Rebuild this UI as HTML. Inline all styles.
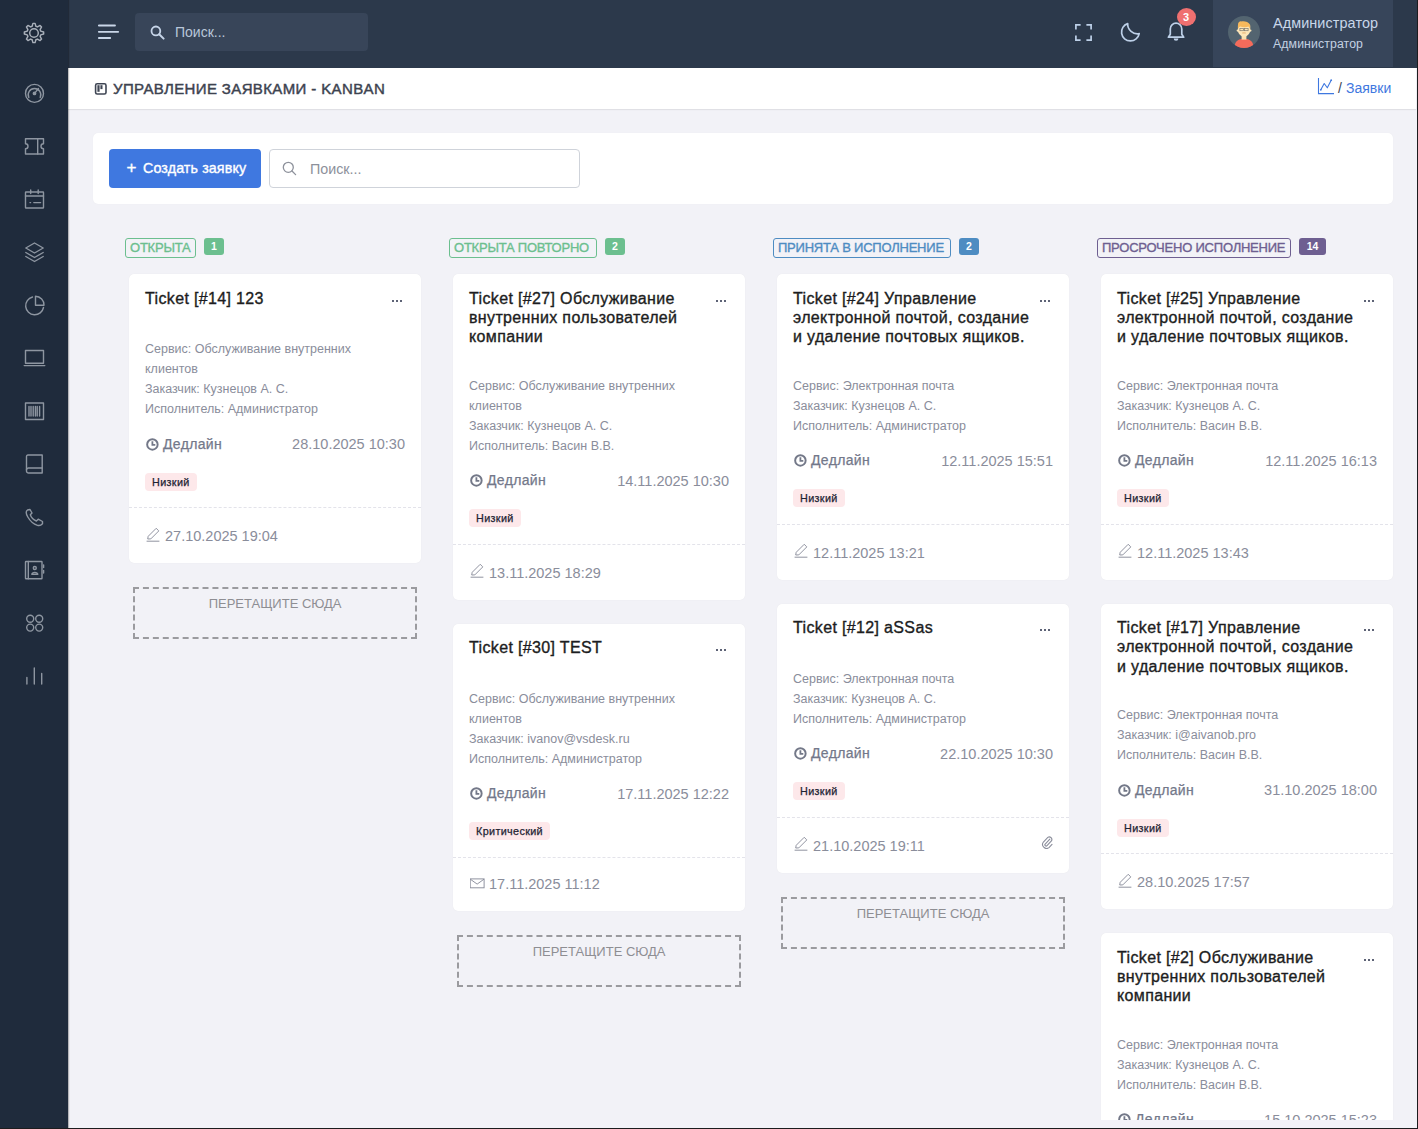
<!DOCTYPE html>
<html><head><meta charset="utf-8"><style>
*{box-sizing:border-box;margin:0;padding:0}
html,body{width:1418px;height:1129px;overflow:hidden;background:#1c1c1e}
body{font-family:"Liberation Sans",sans-serif;position:relative;color:#1c1d21}
#frame{position:absolute;left:0;top:0;width:1417px;height:1128px;background:#f2f2f7;overflow:hidden}
#side{position:absolute;left:0;top:0;width:68px;height:1128px;background:#1f2b3c;z-index:3;box-shadow:1px 0 1px rgba(0,0,0,.25)}
#top{position:absolute;left:68px;top:0;width:1349px;height:68px;background:#2c394b;z-index:2}
#tbar{position:absolute;left:68px;top:68px;width:1348px;height:41px;background:#fff;box-shadow:0 1px 1px rgba(0,0,0,.07);z-index:1}
#board{position:absolute;left:68px;top:109px;width:1348px;height:1011px;overflow:hidden}
.abs{position:absolute}
.col{position:absolute;top:165px;width:292px;display:flex;flex-direction:column;gap:24px}
.card{position:absolute;background:#fff;border-radius:5px;box-shadow:0 0 1px rgba(0,0,0,.06)}
.tk{position:relative;width:292px;background:#fff;border-radius:5px;box-shadow:0 0 1px rgba(0,0,0,.08);padding:14.6px 16px 0 16px}
.tk .hd{min-height:21.2px}
.tk .ttl{font-size:16px;line-height:19.2px;white-space:nowrap;color:#1c1d21;width:240px;letter-spacing:0.35px;-webkit-text-stroke:0.35px #1c1d21}
.tk .dots{position:absolute;left:263px;top:25.5px;width:11px;height:2px}
.tk .dots i{position:absolute;top:0;width:2px;height:2px;background:#5d6376}
.tk .inf{position:relative;top:1px;margin-top:28.3px;font-size:12.5px;line-height:20px;color:#8a8d9b;white-space:nowrap}
.tk .dl{margin-top:14.85px;height:20px;line-height:20px;position:relative}
.tk .dl b{position:absolute;left:18px;top:0.6px;font-size:14px;color:#73788a;font-weight:normal;letter-spacing:0.35px;-webkit-text-stroke:0.25px #73788a}
.tk .dl span{position:absolute;right:0;top:1.3px;font-size:14.5px;color:#8a8d9b}
.tk .dl svg{position:absolute;left:1px;top:4.6px}
.tk .pr{margin-top:19.9px;display:inline-block;height:18px;line-height:18px;padding:0 7px;border-radius:4px;background:#fde8ea;font-size:10.8px;color:#1e2433;vertical-align:top;letter-spacing:0.35px;-webkit-text-stroke:0.25px #1e2433}
.tk .sep{margin:16.35px -16px 0 -16px;border-top:1px dashed #e3e3ea}
.tk .ft{margin-top:17.55px;height:20px;line-height:20px;position:relative;margin-bottom:17.51px}
.tk .ft.m{height:17.9px;line-height:17.9px}
.tk .ft span{position:absolute;left:20px;top:0.6px;font-size:14.5px;color:#8a8d9b}
.tk .ft svg{position:absolute;left:0.5px;top:0.8px}
.drop{position:relative;margin-left:4px;width:284px;height:52px;border:2px dashed #9b9b9f;text-align:center;font-size:13px;color:#8e8e93;padding-top:7px;line-height:16px}
.colh{position:absolute;height:20px;border:1px solid;border-radius:3px;font-size:13px;line-height:18px;padding:0 0 0 4px;white-space:nowrap;letter-spacing:-0.22px;-webkit-text-stroke:0.35px currentColor}
.cnt{position:absolute;height:17px;border-radius:3px;font-size:10.5px;font-weight:bold;color:#fff;text-align:center;line-height:17px}
</style></head><body>
<div id="frame">
<div id="side">
<svg style="position:absolute;left:0;top:0" width="68" height="700" viewBox="0 0 68 700">
<g fill="none" stroke="#8e96a1" stroke-width="1.4" stroke-linecap="round" stroke-linejoin="round">
 <!-- gear -->
 <path id="gear" stroke="#a9b0ba" stroke-width="1.45" d="M32.13 26.25 L32.94 23.36 L35.06 23.36 L35.87 26.25 L37.45 26.91 L40.06 25.43 L41.57 26.94 L40.09 29.55 L40.75 31.13 L43.64 31.94 L43.64 34.06 L40.75 34.87 L40.09 36.45 L41.57 39.06 L40.06 40.57 L37.45 39.09 L35.87 39.75 L35.06 42.64 L32.94 42.64 L32.13 39.75 L30.55 39.09 L27.94 40.57 L26.43 39.06 L27.91 36.45 L27.25 34.87 L24.36 34.06 L24.36 31.94 L27.25 31.13 L27.91 29.55 L26.43 26.94 L27.94 25.43 L30.55 26.91 Z"/>
 <circle cx="34" cy="33" r="4.3" stroke="#a9b0ba" stroke-width="1.45"/>
 <!-- speedometer -->
 <circle cx="34.5" cy="93.4" r="9"/>
 <path d="M28.8 97.5 A6.3 6.3 0 1 1 40.2 97.5"/>
 <path d="M34.5 93.4 L38.4 88.6"/>
 <circle cx="34.5" cy="93.4" r="1.2" fill="#8e96a1"/>
 <!-- ticket -->
 <path d="M25.5 138.7 H43.5 V143.8 A2.5 2.5 0 0 0 43.5 148.8 V154 H25.5 V148.8 A2.5 2.5 0 0 0 25.5 143.8 Z"/>
 <path d="M37.7 138.7 V154"/>
 <!-- calendar -->
 <rect x="25.5" y="192" width="18" height="16" rx="0.5"/>
 <path d="M25.5 196 H43.5 M30.7 190 V193.5 M38.2 190 V193.5 M30 202.6 H30.6 M33.8 202.6 H40.6"/>
 <!-- layers -->
 <path d="M34.5 243 L43.2 248 L34.5 253 L25.8 248 Z"/>
 <path d="M25.8 252.5 L34.5 257.5 L43.2 252.5"/>
 <path d="M25.8 256.5 L34.5 261.5 L43.2 256.5"/>
 <!-- pie -->
 <path d="M32.5 297 A9 9 0 1 0 43.5 307.5"/>
 <path d="M35.5 296.2 V305.2 H44 A8.6 8.6 0 0 0 35.5 296.2 Z"/>
 <!-- laptop -->
 <rect x="25.5" y="350.5" width="18" height="12.8"/>
 <path d="M24.2 365.6 H44.8"/>
 <!-- barcode -->
 <rect x="25.5" y="403" width="18" height="16.5"/>
 <path d="M29 406.5 V416 M31 406.5 V416 M33.2 406.5 V416 M35.4 406.5 V416 M37.2 406.5 V416 M39.6 406.5 V416"/>
 <!-- book -->
 <path d="M27.8 455 H42.2 V473 H28.8 A2 2 0 0 1 26.5 471 V456.5 A1.5 1.5 0 0 1 27.8 455 Z"/>
 <path d="M26.5 469.7 A2 2 0 0 1 28.8 468 H42.2"/>
 <!-- phone -->
 <path d="M27.5 510 C26 511 25.8 513.5 27.8 517 C30 520.8 33.2 524 37.5 525.3 C39.5 526 41 525.4 42.5 523.8 L42.5 521.5 L38.2 519.2 L36.4 521 C33.9 520 31.2 517.4 30.3 514.8 L32 513 L30 509.5 Z"/>
 <!-- contacts -->
 <rect x="25.5" y="561.5" width="16.5" height="17.3" rx="0.5"/>
 <path d="M28.3 561.5 V578.8 M43.6 565 V567.5 M43.6 570.5 V573"/>
 <circle cx="34.8" cy="568" r="1.5"/>
 <path d="M31.8 574.3 C32.2 571.7 37.4 571.7 37.8 574.3 Z"/>
 <!-- four circles -->
 <circle cx="30.2" cy="618.8" r="3.5"/><circle cx="39.2" cy="618.8" r="3.5"/>
 <circle cx="30.2" cy="627.6" r="3.5"/><circle cx="39.2" cy="627.6" r="3.5"/>
 <!-- bars -->
 <path d="M26.9 677.5 V684 M34.3 668 V684 M41.7 673.5 V684"/>
</g></svg></div>

<div id="top">
 <svg class="abs" style="left:30px;top:24px" width="22" height="16" viewBox="0 0 22 16"><path d="M0.8 1.5 H17 M0.8 7.8 H20.2 M0.8 14 H12.2" stroke="#c9d6e8" stroke-width="1.8" stroke-linecap="round"/></svg>
 <div class="abs" style="left:67px;top:13px;width:233px;height:38px;background:#384559;border-radius:4px"></div>
 <svg class="abs" style="left:82px;top:25px" width="15" height="15" viewBox="0 0 15 15"><circle cx="5.9" cy="5.9" r="4.4" fill="none" stroke="#c6d4e8" stroke-width="1.8"/><path d="M9.2 9.2 L13.6 13.6" stroke="#c6d4e8" stroke-width="2" stroke-linecap="round"/></svg>
 <div class="abs" style="left:107px;top:24px;font-size:14px;line-height:16px;color:#b9c7da">Поиск...</div>
 <!-- fullscreen -->
 <svg class="abs" style="left:1007px;top:24px" width="17" height="17" viewBox="0 0 17 17"><path d="M0.9 5.6 V0.9 H5.6 M11.4 0.9 H16.1 V5.6 M16.1 11.4 V16.1 H11.4 M5.6 16.1 H0.9 V11.4" fill="none" stroke="#bdd0e8" stroke-width="1.7"/></svg>
 <svg class="abs" style="left:0;top:0" width="1349" height="68" viewBox="68 0 1349 68">
  <path d="M1127.7 23.6 A8.9 8.9 0 1 0 1139.2 33.6 A9.75 9.75 0 0 1 1127.7 23.6 Z" fill="none" stroke="#bdd0e8" stroke-width="1.7" stroke-linejoin="round"/>
  <path d="M1168.4 37.2 L1170.3 34.2 V28.9 A5.75 5.75 0 0 1 1181.8 28.9 V34.2 L1183.7 37.2 Z" fill="none" stroke="#bdd0e8" stroke-width="1.7" stroke-linejoin="round"/>
  <path d="M1173.7 38.4 A2.35 2.35 0 0 0 1178.4 38.4 Z" fill="#bdd0e8"/>
 </svg>
 <div class="abs" style="left:1108.5px;top:7.5px;width:19px;height:18px;border-radius:50%;background:#ef7070;color:#fff;font-size:11px;line-height:18px;font-weight:bold;text-align:center">3</div>
 <!-- user -->
 <div class="abs" style="left:1145px;top:0;width:180px;height:67px;background:#37455a"></div>
 <svg class="abs" style="left:1160px;top:16px" width="32" height="32" viewBox="0 0 32 32">
  <defs><clipPath id="av"><circle cx="16" cy="16" r="16"/></clipPath></defs>
  <circle cx="16" cy="16" r="16" fill="#536470"/>
  <g clip-path="url(#av)">
  <path d="M6.4 33 C6.4 25.2 9.5 23.2 16 22.8 C22.5 23.2 25.6 25.2 25.6 33 Z" fill="#f56b5b"/>
  </g>
  <rect x="13.6" y="18" width="4.8" height="5.6" fill="#fbe0ad"/>
  <circle cx="9.7" cy="14.6" r="1.1" fill="#fde6b8"/><circle cx="22.4" cy="14.6" r="1.1" fill="#fde6b8"/>
  <path d="M9.9 9.5 V14.5 C9.9 17.6 13 20.8 16 20.8 C19 20.8 22.2 17.6 22.2 14.5 V9.5 Z" fill="#fde6b8"/>
  <path d="M10 13.2 V8.8 C10 6.2 11.6 5 13.6 5.4 C15.6 4.8 20.6 5.4 22.1 8.8 V13.4 C21.6 11.8 21 11.2 20.5 10.6 C18.5 11.4 14.5 11.2 12.2 10.6 C11 11.2 10.4 12 10 13.2 Z" fill="#f8b95c"/>
  <rect x="11.9" y="12.4" width="3.5" height="2.3" fill="none" stroke="#7a7770" stroke-width="0.7"/>
  <rect x="16.6" y="12.4" width="3.5" height="2.3" fill="none" stroke="#7a7770" stroke-width="0.7"/>
  <ellipse cx="16" cy="16.9" rx="2.2" ry="0.7" fill="#eab87b"/>
 </svg>
 <div class="abs" style="left:1205px;top:15px;font-size:14.4px;line-height:16px;color:#c8d7ea;letter-spacing:0.1px">Администратор</div>
 <div class="abs" style="left:1205px;top:36.5px;font-size:12.3px;line-height:14px;color:#c3d1e2;letter-spacing:0.1px">Администратор</div>
</div>

<div id="tbar">
 <svg class="abs" style="left:26px;top:14px" width="14" height="14" viewBox="0 0 14 14"><rect x="1.6" y="1.8" width="10.4" height="10.2" rx="1.6" fill="none" stroke="#3f4654" stroke-width="1.6"/><rect x="3.4" y="3.2" width="2.2" height="6.6" fill="#3f4654"/><rect x="6.4" y="3.2" width="2.1" height="3.9" fill="#3f4654"/></svg>
 <div class="abs" style="left:45px;top:12px;font-size:15px;letter-spacing:0.37px;-webkit-text-stroke:0.45px #3d4350;line-height:17px;color:#3d4350">УПРАВЛЕНИЕ ЗАЯВКАМИ - KANBAN</div>
 <svg class="abs" style="left:1249px;top:9px" width="18" height="18" viewBox="0 0 18 18"><path d="M1.5 1 V16.6 H17" fill="none" stroke="#3f78e0" stroke-width="1.1"/><path d="M3.8 12.8 L7.2 6.5 L10.3 10.8 L14.2 3.2" fill="none" stroke="#3f78e0" stroke-width="1.1" stroke-linejoin="round"/><circle cx="3.8" cy="12.8" r="0.9" fill="#3f78e0"/><circle cx="14.2" cy="3.2" r="0.9" fill="#3f78e0"/></svg>
 <div class="abs" style="left:1270px;top:12px;font-size:14px;line-height:17px;color:#3d4350">/</div>
 <div class="abs" style="left:1278px;top:12px;font-size:14px;line-height:17px;color:#3f78e0">Заявки</div>
</div>
<div id="board">

<div class="card" style="left:25px;top:24px;width:1300px;height:71px">
 <div class="abs" style="left:16px;top:16px;width:152px;height:39px;background:#3f78e0;border-radius:4px;color:#fff;font-size:14.3px;line-height:37px;padding-left:17.5px;white-space:nowrap;letter-spacing:0.1px;-webkit-text-stroke:0.35px #fff"><span style="font-size:17px;position:relative;top:0px;margin-right:6.5px">+</span>Создать заявку</div>
 <div class="abs" style="left:176px;top:16px;width:311px;height:39px;border:1px solid #cfd3da;border-radius:4px"></div>
 <svg class="abs" style="left:189px;top:28px" width="15" height="15" viewBox="0 0 15 15"><circle cx="6.3" cy="6.3" r="5" fill="none" stroke="#8d919b" stroke-width="1.3"/><path d="M10 10 L13.6 13.6" stroke="#8d919b" stroke-width="1.3" stroke-linecap="round"/></svg>
 <div class="abs" style="left:217px;top:28px;font-size:14.3px;line-height:16px;color:#8d919b">Поиск...</div>
</div>
<div class="colh" style="left:57px;top:129px;width:71px;color:#6cbf8f;border-color:#6cbf8f">ОТКРЫТА</div><div class="cnt" style="left:136px;top:129px;width:20px;background:#6cbf8f">1</div><div class="colh" style="left:381px;top:129px;width:148px;color:#6cbf8f;border-color:#6cbf8f">ОТКРЫТА ПОВТОРНО</div><div class="cnt" style="left:537px;top:129px;width:20px;background:#6cbf8f">2</div><div class="colh" style="left:705px;top:129px;width:178px;color:#4e8cc2;border-color:#4e8cc2">ПРИНЯТА В ИСПОЛНЕНИЕ</div><div class="cnt" style="left:891px;top:129px;width:20px;background:#4e8cc2">2</div><div class="colh" style="left:1029px;top:129px;width:194px;color:#6e5f91;border-color:#6e5f91">ПРОСРОЧЕНО ИСПОЛНЕНИЕ</div><div class="cnt" style="left:1231px;top:129px;width:27px;background:#6e5f91">14</div>
<div class="col" style="left:61px"><div class="tk">
<div class="hd"><div class="ttl">Ticket [#14] 123</div></div>
<div class="dots"><i style="left:0"></i><i style="left:4.2px"></i><i style="left:8.4px"></i></div>
<div class="inf">Сервис: Обслуживание внутренних<br>клиентов<br>Заказчик: Кузнецов А. С.<br>Исполнитель: Администратор</div>
<div class="dl"><svg width="13" height="13" viewBox="0 0 13 13"><circle cx="6.4" cy="6.4" r="5.25" fill="none" stroke="#737888" stroke-width="1.95"/><path d="M6.4 3.3 V6.9 H9.3" fill="none" stroke="#737888" stroke-width="1.8"/></svg><b>Дедлайн</b><span>28.10.2025 10:30</span></div>
<div style="height:37.9px"><div class="pr">Низкий</div></div>
<div class="sep"></div>
<div class="ft"><svg width="15" height="15" viewBox="0 0 15 15"><path d="M0.6 14.2 H13.4 M1.7 12 L2.2 9.3 L10.2 1.3 L12.8 3.9 L4.8 11.9 Z" fill="none" stroke="#8a8d9b" stroke-width="0.95" stroke-linejoin="round"/></svg><span>27.10.2025 19:04</span></div>
</div><div class="drop">ПЕРЕТАЩИТЕ СЮДА</div></div><div class="col" style="left:385px"><div class="tk">
<div class="hd"><div class="ttl">Ticket [#27] Обслуживание<br>внутренних пользователей<br>компании</div></div>
<div class="dots"><i style="left:0"></i><i style="left:4.2px"></i><i style="left:8.4px"></i></div>
<div class="inf">Сервис: Обслуживание внутренних<br>клиентов<br>Заказчик: Кузнецов А. С.<br>Исполнитель: Васин В.В.</div>
<div class="dl"><svg width="13" height="13" viewBox="0 0 13 13"><circle cx="6.4" cy="6.4" r="5.25" fill="none" stroke="#737888" stroke-width="1.95"/><path d="M6.4 3.3 V6.9 H9.3" fill="none" stroke="#737888" stroke-width="1.8"/></svg><b>Дедлайн</b><span>14.11.2025 10:30</span></div>
<div style="height:37.9px"><div class="pr">Низкий</div></div>
<div class="sep"></div>
<div class="ft"><svg width="15" height="15" viewBox="0 0 15 15"><path d="M0.6 14.2 H13.4 M1.7 12 L2.2 9.3 L10.2 1.3 L12.8 3.9 L4.8 11.9 Z" fill="none" stroke="#8a8d9b" stroke-width="0.95" stroke-linejoin="round"/></svg><span>13.11.2025 18:29</span></div>
</div><div class="tk">
<div class="hd"><div class="ttl">Ticket [#30] TEST</div></div>
<div class="dots"><i style="left:0"></i><i style="left:4.2px"></i><i style="left:8.4px"></i></div>
<div class="inf">Сервис: Обслуживание внутренних<br>клиентов<br>Заказчик: ivanov@vsdesk.ru<br>Исполнитель: Администратор</div>
<div class="dl"><svg width="13" height="13" viewBox="0 0 13 13"><circle cx="6.4" cy="6.4" r="5.25" fill="none" stroke="#737888" stroke-width="1.95"/><path d="M6.4 3.3 V6.9 H9.3" fill="none" stroke="#737888" stroke-width="1.8"/></svg><b>Дедлайн</b><span>17.11.2025 12:22</span></div>
<div style="height:37.9px"><div class="pr">Критический</div></div>
<div class="sep"></div>
<div class="ft m"><svg width="15" height="15" viewBox="0 0 15 15"><rect x="0.2" y="2.9" width="13.9" height="8.9" fill="none" stroke="#8a8d9b" stroke-width="0.95"/><path d="M0.3 3.2 L7.15 8.1 L14 3.2" fill="none" stroke="#8a8d9b" stroke-width="0.95"/></svg><span>17.11.2025 11:12</span></div>
</div><div class="drop">ПЕРЕТАЩИТЕ СЮДА</div></div><div class="col" style="left:709px"><div class="tk">
<div class="hd"><div class="ttl">Ticket [#24] Управление<br>электронной почтой, создание<br>и удаление почтовых ящиков.</div></div>
<div class="dots"><i style="left:0"></i><i style="left:4.2px"></i><i style="left:8.4px"></i></div>
<div class="inf">Сервис: Электронная почта<br>Заказчик: Кузнецов А. С.<br>Исполнитель: Администратор</div>
<div class="dl"><svg width="13" height="13" viewBox="0 0 13 13"><circle cx="6.4" cy="6.4" r="5.25" fill="none" stroke="#737888" stroke-width="1.95"/><path d="M6.4 3.3 V6.9 H9.3" fill="none" stroke="#737888" stroke-width="1.8"/></svg><b>Дедлайн</b><span>12.11.2025 15:51</span></div>
<div style="height:37.9px"><div class="pr">Низкий</div></div>
<div class="sep"></div>
<div class="ft"><svg width="15" height="15" viewBox="0 0 15 15"><path d="M0.6 14.2 H13.4 M1.7 12 L2.2 9.3 L10.2 1.3 L12.8 3.9 L4.8 11.9 Z" fill="none" stroke="#8a8d9b" stroke-width="0.95" stroke-linejoin="round"/></svg><span>12.11.2025 13:21</span></div>
</div><div class="tk">
<div class="hd"><div class="ttl">Ticket [#12] aSSas</div></div>
<div class="dots"><i style="left:0"></i><i style="left:4.2px"></i><i style="left:8.4px"></i></div>
<div class="inf">Сервис: Электронная почта<br>Заказчик: Кузнецов А. С.<br>Исполнитель: Администратор</div>
<div class="dl"><svg width="13" height="13" viewBox="0 0 13 13"><circle cx="6.4" cy="6.4" r="5.25" fill="none" stroke="#737888" stroke-width="1.95"/><path d="M6.4 3.3 V6.9 H9.3" fill="none" stroke="#737888" stroke-width="1.8"/></svg><b>Дедлайн</b><span>22.10.2025 10:30</span></div>
<div style="height:37.9px"><div class="pr">Низкий</div></div>
<div class="sep"></div>
<div class="ft"><svg width="15" height="15" viewBox="0 0 15 15"><path d="M0.6 14.2 H13.4 M1.7 12 L2.2 9.3 L10.2 1.3 L12.8 3.9 L4.8 11.9 Z" fill="none" stroke="#8a8d9b" stroke-width="0.95" stroke-linejoin="round"/></svg><span>21.10.2025 19:11</span><div class="abs" style="right:1px;top:-1px;width:12px;height:14px"><svg width="12" height="14" viewBox="0 0 12 14"><path d="M8.8 4.2 L4.2 9 A1.2 1.2 0 0 0 6 10.6 L10.4 6 A2.6 2.6 0 0 0 6.8 2.4 L2.4 7 A4 4 0 0 0 8 12.6 L11 9.4" fill="none" stroke="#8a8d9b" stroke-width="1.1" stroke-linecap="round"/></svg></div></div>
</div><div class="drop">ПЕРЕТАЩИТЕ СЮДА</div></div><div class="col" style="left:1033px"><div class="tk">
<div class="hd"><div class="ttl">Ticket [#25] Управление<br>электронной почтой, создание<br>и удаление почтовых ящиков.</div></div>
<div class="dots"><i style="left:0"></i><i style="left:4.2px"></i><i style="left:8.4px"></i></div>
<div class="inf">Сервис: Электронная почта<br>Заказчик: Кузнецов А. С.<br>Исполнитель: Васин В.В.</div>
<div class="dl"><svg width="13" height="13" viewBox="0 0 13 13"><circle cx="6.4" cy="6.4" r="5.25" fill="none" stroke="#737888" stroke-width="1.95"/><path d="M6.4 3.3 V6.9 H9.3" fill="none" stroke="#737888" stroke-width="1.8"/></svg><b>Дедлайн</b><span>12.11.2025 16:13</span></div>
<div style="height:37.9px"><div class="pr">Низкий</div></div>
<div class="sep"></div>
<div class="ft"><svg width="15" height="15" viewBox="0 0 15 15"><path d="M0.6 14.2 H13.4 M1.7 12 L2.2 9.3 L10.2 1.3 L12.8 3.9 L4.8 11.9 Z" fill="none" stroke="#8a8d9b" stroke-width="0.95" stroke-linejoin="round"/></svg><span>12.11.2025 13:43</span></div>
</div><div class="tk">
<div class="hd"><div class="ttl">Ticket [#17] Управление<br>электронной почтой, создание<br>и удаление почтовых ящиков.</div></div>
<div class="dots"><i style="left:0"></i><i style="left:4.2px"></i><i style="left:8.4px"></i></div>
<div class="inf">Сервис: Электронная почта<br>Заказчик: i@aivanob.pro<br>Исполнитель: Васин В.В.</div>
<div class="dl"><svg width="13" height="13" viewBox="0 0 13 13"><circle cx="6.4" cy="6.4" r="5.25" fill="none" stroke="#737888" stroke-width="1.95"/><path d="M6.4 3.3 V6.9 H9.3" fill="none" stroke="#737888" stroke-width="1.8"/></svg><b>Дедлайн</b><span>31.10.2025 18:00</span></div>
<div style="height:37.9px"><div class="pr">Низкий</div></div>
<div class="sep"></div>
<div class="ft"><svg width="15" height="15" viewBox="0 0 15 15"><path d="M0.6 14.2 H13.4 M1.7 12 L2.2 9.3 L10.2 1.3 L12.8 3.9 L4.8 11.9 Z" fill="none" stroke="#8a8d9b" stroke-width="0.95" stroke-linejoin="round"/></svg><span>28.10.2025 17:57</span></div>
</div><div class="tk">
<div class="hd"><div class="ttl">Ticket [#2] Обслуживание<br>внутренних пользователей<br>компании</div></div>
<div class="dots"><i style="left:0"></i><i style="left:4.2px"></i><i style="left:8.4px"></i></div>
<div class="inf">Сервис: Электронная почта<br>Заказчик: Кузнецов А. С.<br>Исполнитель: Васин В.В.</div>
<div class="dl"><svg width="13" height="13" viewBox="0 0 13 13"><circle cx="6.4" cy="6.4" r="5.25" fill="none" stroke="#737888" stroke-width="1.95"/><path d="M6.4 3.3 V6.9 H9.3" fill="none" stroke="#737888" stroke-width="1.8"/></svg><b>Дедлайн</b><span>15.10.2025 15:23</span></div>
<div style="height:37.9px"><div class="pr">Низкий</div></div>
<div class="sep"></div>
<div class="ft"><svg width="15" height="15" viewBox="0 0 15 15"><path d="M0.6 14.2 H13.4 M1.7 12 L2.2 9.3 L10.2 1.3 L12.8 3.9 L4.8 11.9 Z" fill="none" stroke="#8a8d9b" stroke-width="0.95" stroke-linejoin="round"/></svg><span>14.10.2025 10:00</span></div>
</div></div>

</div>
</div>
</body></html>
